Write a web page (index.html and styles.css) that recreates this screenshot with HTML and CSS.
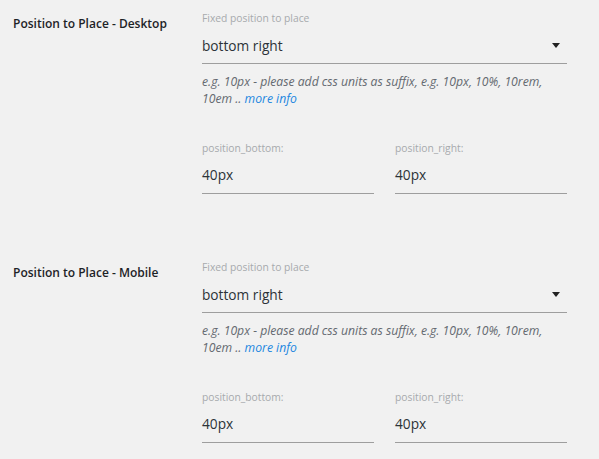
FILE: index.html
```html
<!DOCTYPE html>
<html lang="en">
<head>
    <meta charset="UTF-8">
    <title>Position settings</title>
    <link rel="stylesheet" href="styles.css">
</head>
<body>
    <div class="settings">
        <div class="row">
            <h3 class="row-title">Position to Place - Desktop</h3>
            <div class="fields">
                <label class="field-label">Fixed position to place</label>
                <div class="select">
                    <span>bottom right</span>
                    <span class="caret"></span>
                </div>
                <p class="description">e.g. 10px - please add css units as suffix, e.g. 10px, 10%, 10rem, 10em .. <a href="#">more info</a></p>
                <div class="pair">
                    <div class="field">
                        <label class="field-label">position_bottom:</label>
                        <div class="input">40px</div>
                    </div>
                    <div class="field">
                        <label class="field-label">position_right:</label>
                        <div class="input">40px</div>
                    </div>
                </div>
            </div>
        </div>

        <div class="row">
            <h3 class="row-title">Position to Place - Mobile</h3>
            <div class="fields">
                <label class="field-label">Fixed position to place</label>
                <div class="select">
                    <span>bottom right</span>
                    <span class="caret"></span>
                </div>
                <p class="description">e.g. 10px - please add css units as suffix, e.g. 10px, 10%, 10rem, 10em .. <a href="#">more info</a></p>
                <div class="pair">
                    <div class="field">
                        <label class="field-label">position_bottom:</label>
                        <div class="input">40px</div>
                    </div>
                    <div class="field">
                        <label class="field-label">position_right:</label>
                        <div class="input">40px</div>
                    </div>
                </div>
            </div>
        </div>
    </div>
</body>
</html>
```

FILE: styles.css
```css
body {
    background-color: #f1f1f1;
    font-family: 'Open Sans', 'Liberation Sans', Arial, sans-serif;
    margin: 0;
    padding: 0;
}
.settings {
    padding-left: 13px;
}
.row {
    display: grid;
    grid-template-columns: 189px 365px;
    padding-top: 11px;
}
.row + .row {
    margin-top: 55px;
}
.row-title {
    margin: 3px 0 0 0;
    font-size: 12px;
    font-weight: 600;
    line-height: 20px;
    color: #1d2327;
}
.field-label {
    display: block;
    font-size: 10.3px;
    line-height: 14px;
    color: #a7aaad;
}
.select {
    display: flex;
    align-items: center;
    justify-content: space-between;
    box-sizing: border-box;
    height: 37px;
    margin-top: 2px;
    border-bottom: 1px solid #9e9e9e;
    font-size: 13.7px;
    color: #2c3338;
}
.caret {
    width: 0;
    height: 0;
    margin-right: 7px;
    border-left: 4px solid transparent;
    border-right: 4px solid transparent;
    border-top: 5px solid #222;
}
.description {
    margin: 9px 0 0 0;
    font-size: 12.2px;
    font-style: italic;
    line-height: 17px;
    color: #646970;
}
.description a {
    color: #2387e0;
    text-decoration: none;
}
.pair {
    display: grid;
    grid-template-columns: 172px 172px;
    column-gap: 21px;
    margin-top: 34px;
}
.input {
    box-sizing: border-box;
    height: 39px;
    display: flex;
    align-items: center;
    border-bottom: 1px solid #9e9e9e;
    font-size: 13.7px;
    color: #2c3338;
}
```
